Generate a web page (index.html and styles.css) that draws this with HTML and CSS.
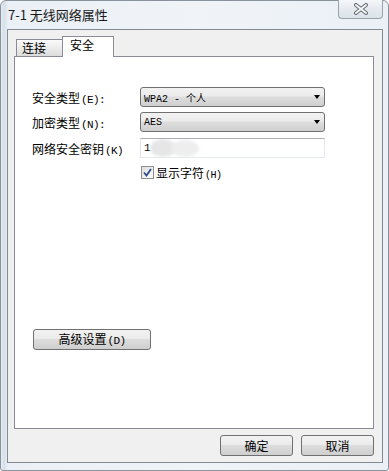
FILE: index.html
```html
<!DOCTYPE html>
<html lang="zh-CN">
<head>
<meta charset="utf-8">
<title>7-1 无线网络属性</title>
<link rel="stylesheet" href="styles.css">
</head>
<body>
<div class="window">
  <div class="titlebar">
    <span class="title">7-1 无线网络属性</span>
    <div class="close">
      <svg width="16" height="12" viewBox="0 0 16 12">
        <path d="M3 2 L13 10 M13 2 L3 10" stroke="#6b6f75" stroke-width="4" stroke-linecap="round"/>
        <path d="M3 2 L13 10 M13 2 L3 10" stroke="#f4f6f8" stroke-width="2" stroke-linecap="round"/>
      </svg>
    </div>
  </div>
  <div class="client">
    <div class="tabs">
      <div class="tab">连接</div>
      <div class="tab active">安全</div>
    </div>
    <div class="panel">
      <div class="row r1">
        <span class="label">安全类型<span class="key">(E):</span></span>
        <div class="select"><span class="val">WPA2 - 个人</span><span class="arrow"></span></div>
      </div>
      <div class="row r2">
        <span class="label">加密类型<span class="key">(N):</span></span>
        <div class="select"><span class="val">AES</span><span class="arrow"></span></div>
      </div>
      <div class="row r3">
        <span class="label">网络安全密钥<span class="key">(K)</span></span>
        <div class="input"><span class="val">1</span><span class="blur b1"></span><span class="blur b2"></span></div>
      </div>
      <div class="check-row">
        <span class="checkbox">
          <svg width="9" height="9" viewBox="0 0 9 9"><path d="M1 4.5 L3.5 7.5 L8 1" fill="none" stroke="#2b4d8c" stroke-width="1.8"/></svg>
        </span>
        <span class="check-label">显示字符<span class="key small">(H)</span></span>
      </div>
      <button class="btn adv">高级设置<span class="key">(D)</span></button>
    </div>
    <div class="footer">
      <button class="btn">确定</button>
      <button class="btn">取消</button>
    </div>
  </div>
</div>
</body>
</html>
```

FILE: styles.css
```css
html, body {
  margin: 0;
  padding: 0;
  background: #ffffff;
}

body {
  font-family: "Noto Sans CJK SC", "Noto Sans", sans-serif;
  font-size: 12px;
  color: #000;
}

.window {
  box-sizing: border-box;
  width: 389px;
  height: 471px;
  border: 1px solid #8a929c;
  border-radius: 6px 6px 3px 3px;
  background: linear-gradient(90deg, #e6ecf3 0px, #d6dee8 3px, #eaf0f6 7px, #f0f4f9 50%, #eaf0f6 100%);
  padding: 0 5px 7px 6px;
  display: flex;
  flex-direction: column;
}

.titlebar {
  height: 28px;
  display: flex;
  align-items: flex-start;
  position: relative;
}

.title {
  margin-top: 5px;
  margin-left: 1px;
  font-size: 13px;
  line-height: 17px;
  color: #1a1a1a;
}

.close {
  margin-left: auto;
  margin-right: 0;
  margin-top: -1px;
  width: 45px;
  height: 19px;
  box-sizing: border-box;
  border: 1px solid #9aa3ad;
  border-top: none;
  border-radius: 0 0 4px 4px;
  background: linear-gradient(#f4f6f9, #e4e9ef 55%, #dce2ea);
  display: flex;
  align-items: center;
  justify-content: center;
}

.client {
  flex: 1;
  border: 1px solid #848a92;
  background: #f0f0f0;
  padding: 6px 8px 6px 6px;
  display: flex;
  flex-direction: column;
}

.tabs {
  height: 20px;
  display: flex;
  align-items: flex-end;
  position: relative;
  z-index: 2;
}

.tab {
  box-sizing: border-box;
  height: 17px;
  width: 47px;
  margin-left: 2px;
  border: 1px solid #898c95;
  border-bottom: none;
  background: linear-gradient(#fbfbfb, #ececec 50%, #dcdcdc);
  font-size: 12px;
  line-height: 16px;
  padding-left: 5px;
}

.tab.active {
  height: 21px;
  width: 52px;
  margin-left: -1px;
  margin-bottom: -1px;
  background: #ffffff;
  padding-left: 7px;
  line-height: 15px;
}

.panel {
  box-sizing: border-box;
  height: 373px;
  width: 360px;
  border: 1px solid #898c95;
  background: #ffffff;
  padding: 30px 0 0 17px;
  display: flex;
  flex-direction: column;
}

.row {
  display: flex;
  align-items: center;
  height: 20px;
}

.r2 { margin-top: 5px; }
.r3 { margin-top: 6px; }

.label {
  width: 108px;
  white-space: nowrap;
  font-size: 12px;
}

.key {
  font-family: "Liberation Mono", monospace;
  font-size: 11px;
  letter-spacing: -0.6px;
  margin-left: 1px;
}

.key.small { font-size: 10px; letter-spacing: -0.5px; }

.select {
  box-sizing: border-box;
  width: 185px;
  height: 20px;
  border: 1px solid #707070;
  border-radius: 3px;
  background: linear-gradient(#f2f2f2, #ebebeb 45%, #dddddd 50%, #cfcfcf);
  display: flex;
  align-items: center;
  padding-left: 3px;
  position: relative;
}

.val {
  font-family: "Liberation Mono", "Noto Sans CJK SC", monospace;
  font-size: 10px;
}

.arrow {
  margin-left: auto;
  margin-right: 4px;
  width: 0;
  height: 0;
  border-left: 3.5px solid transparent;
  border-right: 3.5px solid transparent;
  border-top: 4px solid #000;
}

.input {
  box-sizing: border-box;
  width: 185px;
  height: 20px;
  border: 1px solid #e3e9ef;
  border-top-color: #abadb3;
  border-left-color: #e2e3ea;
  display: flex;
  align-items: center;
  padding-left: 3px;
  position: relative;
  overflow: hidden;
}

.input .val {
  font-family: "Liberation Mono", monospace;
  font-size: 11px;
}

.blur {
  position: absolute;
  border-radius: 50%;
  filter: blur(1.5px);
}

.b1 {
  left: 9px;
  top: 0px;
  width: 26px;
  height: 18px;
  background: #e6e6e6;
}

.b2 {
  left: 30px;
  top: 1px;
  width: 28px;
  height: 17px;
  background: #eeeeee;
}

.check-row {
  display: flex;
  align-items: center;
  margin-top: 8px;
  margin-left: 109px;
  height: 13px;
}

.checkbox {
  box-sizing: border-box;
  width: 13px;
  height: 13px;
  border: 1px solid #8e8f8f;
  background: linear-gradient(135deg, #dcdcdc, #ffffff);
  display: flex;
  align-items: center;
  justify-content: center;
}

.check-label {
  margin-left: 2px;
  font-size: 12px;
  white-space: nowrap;
}

.btn {
  box-sizing: border-box;
  height: 21px;
  border: 1px solid #707070;
  border-radius: 3px;
  background: linear-gradient(#f2f2f2, #ebebeb 45%, #dddddd 50%, #cfcfcf);
  font-family: "Noto Sans CJK SC", sans-serif;
  font-size: 12px;
  color: #000;
  padding: 0;
  line-height: 18px;
}

.adv {
  margin-top: 150px;
  margin-left: 1px;
  width: 118px;
}

.footer {
  display: flex;
  justify-content: flex-end;
  gap: 8px;
  margin-top: 6px;
}

.footer .btn {
  width: 73px;
}
```
